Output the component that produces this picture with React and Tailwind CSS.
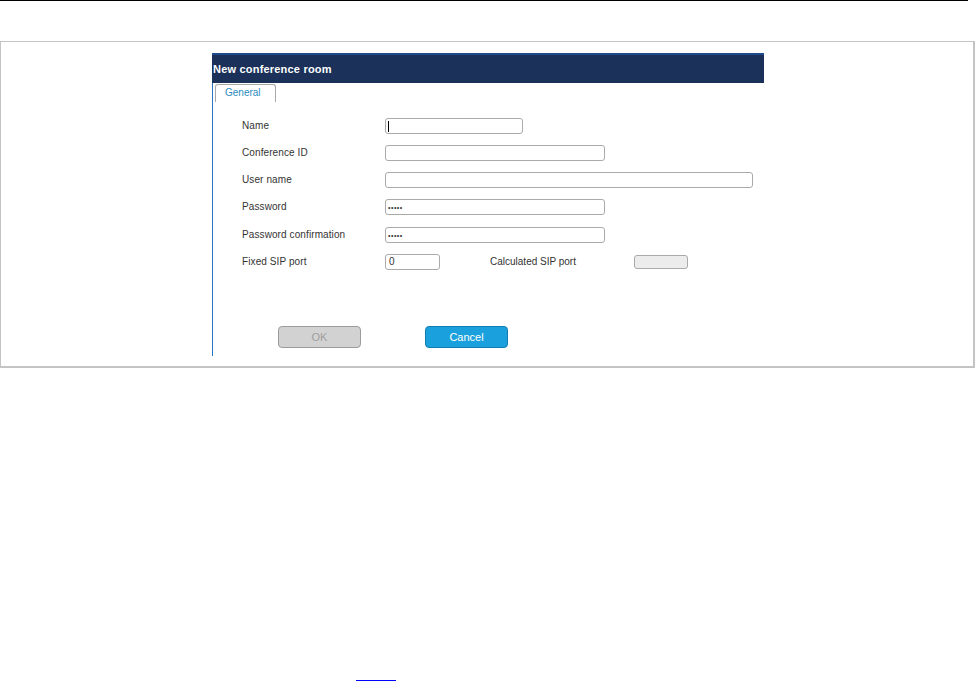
export default function App() {
  const rows = [
    { label: "Name", w: "w-[138px]", caret: true },
    { label: "Conference ID", w: "w-[220px]" },
    { label: "User name", w: "w-[368px]" },
    { label: "Password", w: "w-[220px]", value: "•••••" },
    { label: "Password confirmation", w: "w-[220px]", value: "•••••", mt: "mt-[1px]" },
  ];

  return (
    <div className="min-h-[681px] bg-white font-['Liberation_Sans',Arial,sans-serif] text-[#333]">
      <div className="h-px w-[968px] bg-black" />

      {/* outer frame */}
      <div className="mt-[40px] w-[975px] h-[327px] border border-r-2 border-b-2 border-[#c4c4c4] pl-[211px] pt-[11px]">
        <div className="w-[552px]">
          {/* header */}
          <div className="h-[30px] bg-[#1b3159] border-t-2 border-[#1f4a8c] flex items-center pl-[1px]">
            <span className="text-white text-[11px] font-bold tracking-[0.2px]">New conference room</span>
          </div>

          <div className="border-l border-[#2d75c2] h-[273px]">
            {/* tab */}
            <div className="pl-[2px] pt-px">
              <div className="w-[61px] h-[18px] border border-b-0 border-[#a8a8a8] rounded-t-[3px] text-[10px] text-[#2a8bbd] pl-[9px] leading-[16px]">
                General
              </div>
            </div>

            {/* form */}
            <div className="pt-[16px] pl-[29px] flex flex-col gap-[11px]">
              {rows.map((r) => (
                <div key={r.label} className={`flex items-center h-[16px] ${r.mt || ""}`}>
                  <div className="w-[143px] text-[10px] tracking-[0.1px] -mt-[2px]">{r.label}</div>
                  <div className={`${r.w} h-[16px] border border-[#aaa] rounded-[3px] bg-white flex items-center pl-[2px]`}>
                    {r.caret && <div className="w-px h-[11px] bg-black" />}
                    {r.value && <span className="text-[7px] text-[#333] tracking-[0.5px] leading-none">{r.value}</span>}
                  </div>
                </div>
              ))}
              <div className="flex items-center h-[16px]">
                <div className="w-[143px] text-[10px] tracking-[0.1px] -mt-[1px]">Fixed SIP port</div>
                <div className="w-[55px] h-[16px] border border-[#aaa] rounded-[3px] bg-white text-[10px] pl-[3px] leading-[14px]">0</div>
                <div className="ml-[50px] w-[144px] text-[10px] -mt-[1px]">Calculated SIP port</div>
                <div className="w-[54px] h-[14px] border border-[#aaa] rounded-[3px] bg-[#ececec]" />
              </div>
            </div>

            {/* buttons */}
            <div className="mt-[56px] pl-[65px] flex gap-[64px]">
              <div className="w-[83px] h-[22px] rounded-[4px] bg-[#d2d2d2] border border-[#9c9c9c] text-[#a0a0a0] text-[11px] flex items-center justify-center">
                OK
              </div>
              <div className="w-[83px] h-[22px] rounded-[4px] bg-[#1aa1dd] border border-[#127db0] text-white text-[11px] flex items-center justify-center">
                Cancel
              </div>
            </div>
          </div>
        </div>
      </div>

      <div className="mt-[312px] ml-[356px] w-[40px] h-px bg-[#0000ff]" />
    </div>
  );
}
